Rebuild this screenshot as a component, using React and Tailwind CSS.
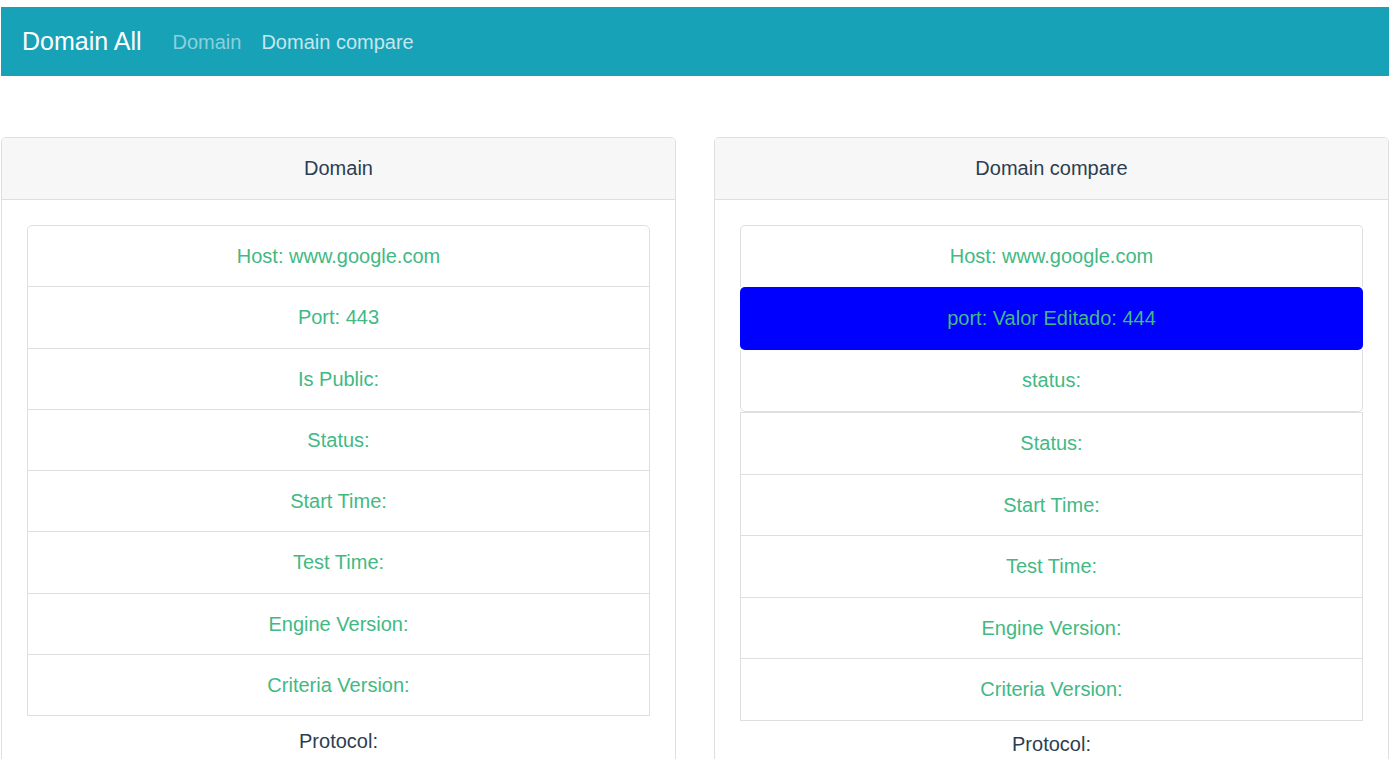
import React from 'react';

const leftItems = [
  'Host: www.google.com',
  'Port: 443',
  'Is Public:',
  'Status:',
  'Start Time:',
  'Test Time:',
  'Engine Version:',
  'Criteria Version:',
];

const compareItems = ['Status:', 'Start Time:', 'Test Time:', 'Engine Version:', 'Criteria Version:'];

function ListGroup({ items, lh, roundTop }) {
  return (
    <ul className="flex flex-col">
      {items.map((text, i) => (
        <li
          key={text}
          className={
            'border border-[#dfdfdf] -mb-px py-[15px] px-[25px] text-center text-[20px] text-[#42b983] ' +
            lh +
            ' ' +
            (i === 0 && roundTop ? 'rounded-t-[5px] ' : '') +
            (i === items.length - 1 ? 'mb-0' : '')
          }
        >
          {text}
        </li>
      ))}
    </ul>
  );
}

function Card({ title, children }) {
  return (
    <div className="w-[675px] border border-[#dfdfdf] rounded-[5px] overflow-hidden">
      <div className="bg-[#f7f7f7] border-b border-[#dfdfdf] py-[15px] leading-[31px] text-center text-[20px] text-[#2c3e50]">
        {title}
      </div>
      <div className="px-[25px] pt-[25px] pb-[25px]">{children}</div>
    </div>
  );
}

export default function App() {
  return (
    <div className="pt-[7px] pl-[1px] pr-[4px] bg-white min-h-screen font-['Liberation_Sans',Arial,sans-serif]">
      <nav className="h-[69px] bg-[#17a2b8] flex items-center px-[21px]">
        <span className="text-[25px] text-white mr-[21px] leading-[37px]">Domain All</span>
        <a className="px-[10px] text-[20px] text-white/50">Domain</a>
        <a className="px-[10px] text-[20px] text-white/75">Domain compare</a>
      </nav>

      <div className="mt-[61px] flex gap-[38px]">
        <Card title="Domain">
          <ListGroup items={leftItems} lh="leading-[30.25px]" roundTop />
          <div className="mt-[10px] leading-[30px] text-center text-[20px] text-[#2c3e50]">Protocol:</div>
        </Card>

        <Card title="Domain compare">
          <ul className="flex flex-col">
            <li className="border-x border-t border-[#dfdfdf] rounded-t-[5px] py-[15px] leading-[31px] text-center text-[20px] text-[#42b983]">
              Host: www.google.com
            </li>
            <li className="bg-[#0000ff] rounded-[5px] py-[16px] leading-[31px] text-center text-[20px] text-[#42b983]">
              port: Valor Editado: 444
            </li>
            <li className="border-x border-b border-[#dfdfdf] rounded-b-[5px] py-[15px] leading-[31px] text-center text-[20px] text-[#42b983]">
              status:
            </li>
          </ul>
          <ListGroup items={compareItems} lh="leading-[30.6px]" />
          <div className="mt-[8px] leading-[30px] text-center text-[20px] text-[#2c3e50]">Protocol:</div>
        </Card>
      </div>
    </div>
  );
}
